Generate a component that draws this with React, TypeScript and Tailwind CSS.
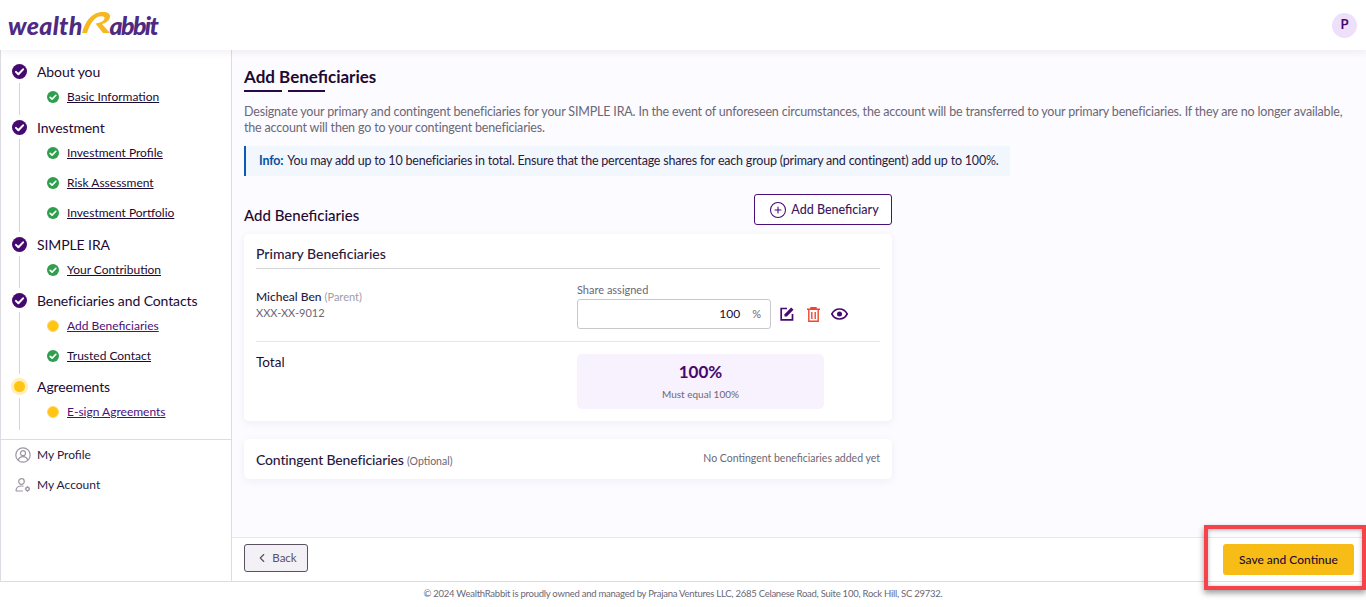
import { ChevronLeft, CirclePlus } from "lucide-react";

type SubStep = { label: string; state: "done" | "active" };
type Step = { title: string; state: "done" | "active"; subs: SubStep[] };

const steps: Step[] = [
  { title: "About you", state: "done", subs: [{ label: "Basic Information", state: "done" }] },
  {
    title: "Investment",
    state: "done",
    subs: [
      { label: "Investment Profile", state: "done" },
      { label: "Risk Assessment", state: "done" },
      { label: "Investment Portfolio", state: "done" },
    ],
  },
  { title: "SIMPLE IRA", state: "done", subs: [{ label: "Your Contribution", state: "done" }] },
  {
    title: "Beneficiaries and Contacts",
    state: "done",
    subs: [
      { label: "Add Beneficiaries", state: "active" },
      { label: "Trusted Contact", state: "done" },
    ],
  },
  { title: "Agreements", state: "active", subs: [{ label: "E-sign Agreements", state: "active" }] },
];

function Check({ size, bg }: { size: number; bg: string }) {
  return (
    <svg width={size} height={size} viewBox="0 0 16 16" className="shrink-0">
      <circle cx="8" cy="8" r="8" fill={bg} />
      <path d="M4.200 8.400l2.600 2.500 5-5.200" fill="none" stroke="#fff" strokeWidth="2.200" strokeLinecap="round" strokeLinejoin="round" />
    </svg>
  );
}

function Logo() {
  return (
    <div className="flex items-center h-[50px] pl-[8px] font-['Lato',sans-serif] italic font-black text-[25px] text-[#4f2a82] leading-none">
      <span className="tracking-[0.3px]">wealth</span>
      <svg width="34" height="24" viewBox="0 0 34 24" className="shrink-0 -ml-[2px] -mr-[5px] -mt-[7px]">
        <path
          d="M1 23C4 12 10 3 20 2c6-.5 9.500 1 9 5-.5 3.500-4 6-8 7l8 9h-7l-7.500-9.500c5-.5 8.500-2.500 9-5 .3-1.800-1.500-2.500-4-2.200C13 7 8.500 15 6 23z"
          fill="#f5b81f"
        />
      </svg>
      <span className="tracking-[-1.7px]">abbit</span>
    </div>
  );
}

function Sidebar() {
  return (
    <aside className="w-[232px] shrink-0 border-x border-[#dcdce2] bg-white flex flex-col">
      <div className="pt-[10px] pl-[11px] pb-[8px] border-b border-[#dcdce2]">
        {steps.map((step) => (
          <div key={step.title} className="flex">
            <div className="w-[15px] flex flex-col items-center shrink-0">
              <div className="h-[22px] flex items-center">
                {step.state === "done" ? (
                  <Check size={15} bg="#45096f" />
                ) : (
                  <div className="w-[11px] h-[11px] rounded-full bg-[#ffc414] ring-[3px] ring-[#ffeeb8]" />
                )}
              </div>
              <div className="w-[1px] flex-1 bg-[#d4d4d8] my-[1px]" />
            </div>
            <div className={step.title === "Investment" ? "pl-[10px] pb-[5px]" : "pl-[10px] pb-[4px]"}>
              <div className="h-[22px] flex items-center text-[14px] tracking-[-0.1px] text-[#1d0a33] whitespace-nowrap">{step.title}</div>
              {step.subs.map((sub) => (
                <div key={sub.label} className="h-[30px] flex items-center gap-[8px] pl-[10px] first:mt-[-1px]">
                  {sub.state === "done" ? (
                    <Check size={12} bg="#2f9e4f" />
                  ) : (
                    <div className="w-[12px] h-[12px] rounded-full bg-[#ffc414] border border-[#ffd766]" />
                  )}
                  <a className={sub.state === "done" ? "text-[12px] underline text-[#1d0a33]" : "text-[12px] underline text-[#4b0f7b]"}>
                    {sub.label}
                  </a>
                </div>
              ))}
            </div>
          </div>
        ))}
      </div>
      <div className="pl-[14px] text-[12px] text-[#2a1a40]">
        <div className="h-[30px] flex items-center gap-[6px]">
          <svg width="16" height="16" viewBox="0 0 16 16" fill="none" stroke="#9b96a3" strokeWidth="1.200">
            <circle cx="8" cy="8" r="7.200" />
            <circle cx="8" cy="6.200" r="2.500" />
            <path d="M3.300 13c.8-2.300 2.600-3.300 4.700-3.300s3.900 1 4.700 3.300" />
          </svg>
          My Profile
        </div>
        <div className="h-[30px] flex items-center gap-[6px]">
          <svg width="16" height="16" viewBox="0 0 16 16" fill="none" stroke="#9b96a3" strokeWidth="1.200">
            <circle cx="6.500" cy="4.500" r="2.800" />
            <path d="M1 14c0-3 2-5 5.500-5 .8 0 1.500.1 2 .3M1 14h7" />
            <circle cx="12.500" cy="12" r="1.700" strokeWidth="1.400" />
            <path d="M12.500 9.300v1M12.500 13.700v1M9.800 12h1M14.200 12h1" strokeWidth="1.100" />
          </svg>
          My Account
        </div>
      </div>
    </aside>
  );
}

function RowActions() {
  return (
    <div className="flex items-center">
      <svg width="16" height="16" viewBox="0 0 16 16" className="ml-[8px]">
        <path d="M8 2.500H2.200v11.300h11.300V8" fill="none" stroke="#45096f" strokeWidth="1.700" />
        <path d="M5.500 10.500V8.200L12.200 1.500l2.300 2.300-6.700 6.700z" fill="#45096f" />
      </svg>
      <svg width="13" height="15" viewBox="0 0 13 15" className="ml-[12px]">
        <path d="M0 2.200h13M4 2V.8h5V2" fill="none" stroke="#f2452f" strokeWidth="1.400" />
        <path d="M1.800 3v11.200h9.400V3M4.800 5v7M8.200 5v7" fill="none" stroke="#f2452f" strokeWidth="1.400" />
      </svg>
      <svg width="17" height="12" viewBox="0 0 17 12" className="ml-[11px]">
        <path d="M.8 6C2.500 2.800 5.200 1 8.500 1s6 1.800 7.700 5c-1.700 3.200-4.400 5-7.700 5S2.500 9.200.8 6z" fill="none" stroke="#45096f" strokeWidth="1.600" />
        <circle cx="8.500" cy="6" r="2.500" fill="#45096f" />
      </svg>
    </div>
  );
}

function MainContent() {
  return (
    <main className="flex-1 min-w-0 flex flex-col">
      <div className="flex-1 min-h-0 bg-[#fcfbff] pl-[12px] pr-[20px] border-b border-[#e8e7ee]">
        <h1 className="pt-[17px] text-[17px] leading-[20px] font-bold text-[#1d0a33]">Add Beneficiaries</h1>
        <div className="flex gap-[6px] mt-[3px]">
          <div className="w-[38px] h-[2px] bg-[#2a0845]" />
          <div className="w-[37px] h-[2px] bg-[#2a0845]" />
        </div>
        <p className="mt-[12px] text-[12.500px] tracking-[-0.17px] leading-[15.500px] text-[#6b6775]">
          Designate your primary and contingent beneficiaries for your SIMPLE IRA. In the event of unforeseen circumstances, the account will be transferred to your primary beneficiaries. If they are no longer available, the account will then go to your contingent beneficiaries.
        </p>
        <div className="mt-[11px] w-[766px] h-[30px] flex items-center bg-[#f1f7fd] border-l-2 border-[#0a5cb8] pl-[13px] text-[12.500px] tracking-[-0.2px] text-[#2a1a40] whitespace-nowrap">
          <b className="text-[#0a4f9e] mr-[4px]">Info:</b> You may add up to 10 beneficiaries in total. Ensure that the percentage shares for each group (primary and contingent) add up to 100%.
        </div>

        <div className="w-[648px]">
          <div className="mt-[18px] flex items-end justify-between">
            <h2 className="text-[15px] font-medium text-[#1d0a33] leading-[20px]">Add Beneficiaries</h2>
            <button className="w-[138px] h-[31px] flex items-center justify-center gap-[4px] pl-[2px] pt-[1px] bg-white border border-[#4b0f7b] rounded-[3px] text-[12.500px] font-medium text-[#3a1760]">
              <CirclePlus size={18} strokeWidth={1.400} color="#45096f" />
              Add Beneficiary
            </button>
          </div>

          <section className="mt-[9px] h-[187px] bg-white rounded-[5px] shadow-[0_2px_10px_rgba(60,30,120,0.06)] px-[12px]">
            <div className="h-[35px] flex items-end pb-[4px] border-b border-[#d4d4d8] text-[14px] font-medium text-[#2a1a40]">
              Primary Beneficiaries
            </div>
            <div className="h-[73px] flex border-b border-[#e5e5e8]">
              <div className="w-[321px] pt-[20px]">
                <div className="text-[12px] leading-[16px] font-medium text-[#2a1a40]">
                  Micheal Ben <span className="text-[11px] font-normal text-[#a09ca8]">(Parent)</span>
                </div>
                <div className="mt-[1px] text-[11px] leading-[14px] text-[#6b6775]">XXX-XX-9012</div>
              </div>
              <div className="pt-[14px]">
                <div className="text-[11px] leading-[14px] text-[#6b6775]">Share assigned</div>
                <div className="flex items-center mt-[2px]">
                  <div className="w-[194px] h-[30px] flex items-center justify-end gap-[12px] pr-[9px] border border-[#c9c9cd] rounded-[3px] text-[12px] text-[#1d0a33]">
                    100 <span className="text-[#6b6775] text-[11px]">%</span>
                  </div>
                  <RowActions />
                </div>
              </div>
            </div>
            <div className="flex pt-[12px]">
              <div className="w-[321px] -mt-[1px] text-[13.500px] leading-[18px] text-[#1d0a33]">Total</div>
              <div className="w-[247px] h-[55px] rounded-[5px] bg-[#f8f2fe] flex flex-col items-center pt-[7px]">
                <div className="text-[17px] leading-[22px] font-bold text-[#45096f]">100%</div>
                <div className="mt-[4px] text-[10px] leading-[14px] text-[#6b6775]">Must equal 100%</div>
              </div>
            </div>
          </section>

          <section className="mt-[18px] h-[40px] bg-white rounded-[5px] shadow-[0_2px_10px_rgba(60,30,120,0.06)] px-[12px] flex items-center justify-between">
            <div className="text-[14px] tracking-[-0.15px] font-medium text-[#2a1a40]">
              Contingent Beneficiaries <span className="text-[10.500px] tracking-normal font-normal text-[#6b6775]">(Optional)</span>
            </div>
            <div className="text-[10.500px] text-[#6b6775]">No Contingent beneficiaries added yet</div>
          </section>
        </div>
      </div>

      <div className="h-[43px] shrink-0 bg-white flex items-start justify-between pt-[6px] pl-[12px] pr-[12px]">
        <button className="w-[64px] h-[28px] flex items-center justify-center gap-[3px] bg-[#f3f1f6] border border-[#5a5060] rounded-[3px] text-[11.500px] text-[#5a5060]">
          <ChevronLeft size={14} strokeWidth={2} />
          Back
        </button>
        <button className="w-[131px] h-[31px] rounded-[3px] bg-[#f7bd16] text-[12px] font-medium text-[#1d0a33]">Save and Continue</button>
      </div>
    </main>
  );
}

export default function App() {
  return (
    <div className="relative h-[607px] w-[1366px] overflow-hidden flex flex-col bg-white font-['Lato',sans-serif]">
      <header className="relative z-10 h-[50px] shrink-0 flex items-center justify-between bg-white shadow-[0_2px_8px_rgba(60,30,120,0.08)] pr-[9px]">
        <Logo />
        <div className="w-[25px] h-[25px] rounded-full bg-[#eee0fb] flex items-center justify-center text-[13px] font-bold text-[#45096f]">P</div>
      </header>
      <div className="flex-1 min-h-0 flex">
        <Sidebar />
        <MainContent />
      </div>
      <footer className="h-[26px] shrink-0 border-t border-[#dcdce2] flex items-center justify-center text-[9.500px] tracking-[-0.25px] text-[#6b6775]">
        © 2024 WealthRabbit is proudly owned and managed by Prajana Ventures LLC, 2685 Celanese Road, Suite 100, Rock Hill, SC 29732.
      </footer>
      {/* red highlight drawn over the save button */}
      <div className="absolute left-[1204px] top-[525px] w-[162px] h-[65px] border-[4px] border-[#f4434a] shadow-[0_3px_6px_rgba(0,0,0,0.4),inset_0_1px_4px_rgba(0,0,0,0.3)]" />
    </div>
  );
}
